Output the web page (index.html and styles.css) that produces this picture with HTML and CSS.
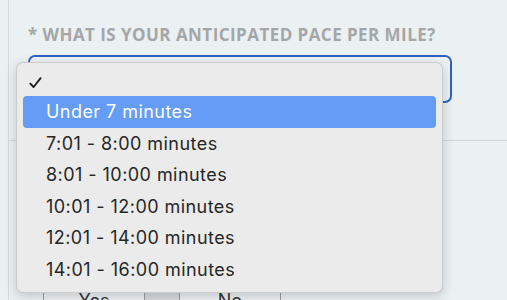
FILE: index.html
```html
<!DOCTYPE html>
<html>
<head>
<meta charset="utf-8">
<link rel="stylesheet" href="styles.css">
</head>
<body>
<div class="page">
  <div class="section">
    <h2 class="question">* WHAT IS YOUR ANTICIPATED PACE PER MILE?</h2>
    <div class="select"></div>
  </div>
  <div class="section second">
    <div class="btn-group">
      <div class="btn">Yes</div>
      <div class="gap"></div>
      <div class="btn">No</div>
    </div>
  </div>
</div>
<div class="menu">
  <div class="opt checked"><svg class="check" width="13" height="12" viewBox="0 0 13 12"><path d="M1.3 6.6 L4.6 10 L11.6 1.2" fill="none" stroke="#1e1e1e" stroke-width="1.9" stroke-linecap="round" stroke-linejoin="round"/></svg></div>
  <div class="opt active">Under 7 minutes</div>
  <div class="opt">7:01 - 8:00 minutes</div>
  <div class="opt">8:01 - 10:00 minutes</div>
  <div class="opt">10:01 - 12:00 minutes</div>
  <div class="opt">12:01 - 14:00 minutes</div>
  <div class="opt">14:01 - 16:00 minutes</div>
</div>
</body>
</html>
```
FILE: styles.css
```css
html, body {
  margin: 0;
  padding: 0;
  height: 100%;
  overflow: hidden;
}
body {
  background: #ebf0f3;
  font-family: "Inter", "Liberation Sans", sans-serif;
}
.page {
  margin-left: 8px;
  border-left: 1px solid #d5d9dc;
  height: 100%;
  display: flex;
  flex-direction: column;
}
.section {
  flex-shrink: 0;
  padding: 0 55px 0 19px;
  height: 141px;
  border-bottom: 1px solid #d3d7da;
  box-sizing: border-box;
  display: flex;
  flex-direction: column;
}
.question {
  margin: 25px 0 0 0;
  font-family: "Open Sans", sans-serif;
  font-weight: 700;
  font-size: 17px;
  line-height: 19px;
  color: #a5a6a7;
  letter-spacing: 0.45px;
  white-space: nowrap;
}
.select {
  margin-top: 11px;
  height: 48px;
  border: 2px solid #2c62c8;
  border-radius: 7px;
  box-sizing: border-box;
  background: #eef2f5;
}
.second {
  border-bottom: none;
  padding: 148px 0 0 34px;
  height: auto;
}
.btn-group {
  display: flex;
}
.btn {
  width: 102px;
  height: 36px;
  border: 1px solid #9a9da0;
  background: #edf0f2;
  font-size: 18px;
  color: #333;
  text-align: center;
  line-height: 20px;
  padding-top: 1px;
  box-sizing: border-box;
}
.gap {
  width: 34px;
  background: #d6dadd;
  border-top: 1px solid #9a9da0;
}
.menu {
  position: absolute;
  left: 16px;
  top: 62px;
  width: 427px;
  height: 231px;
  box-sizing: border-box;
  background: #ebebeb;
  border: 1px solid rgba(0,0,0,0.13);
  border-radius: 7px;
  box-shadow: 0 3px 12px rgba(0,0,0,0.18);
  padding: 1.5px 6px 0 6px;
}
.opt {
  height: 31.5px;
  line-height: 31.5px;
  padding-left: 23px;
  font-size: 18px;
  letter-spacing: 0.45px;
  color: #262626;
  border-radius: 4px;
  white-space: nowrap;
}
.opt.active {
  background: #659cf6;
  color: #fff;
}
.checked {
  position: relative;
}
.check {
  position: absolute;
  left: 6px;
  top: 12.5px;
}
```
